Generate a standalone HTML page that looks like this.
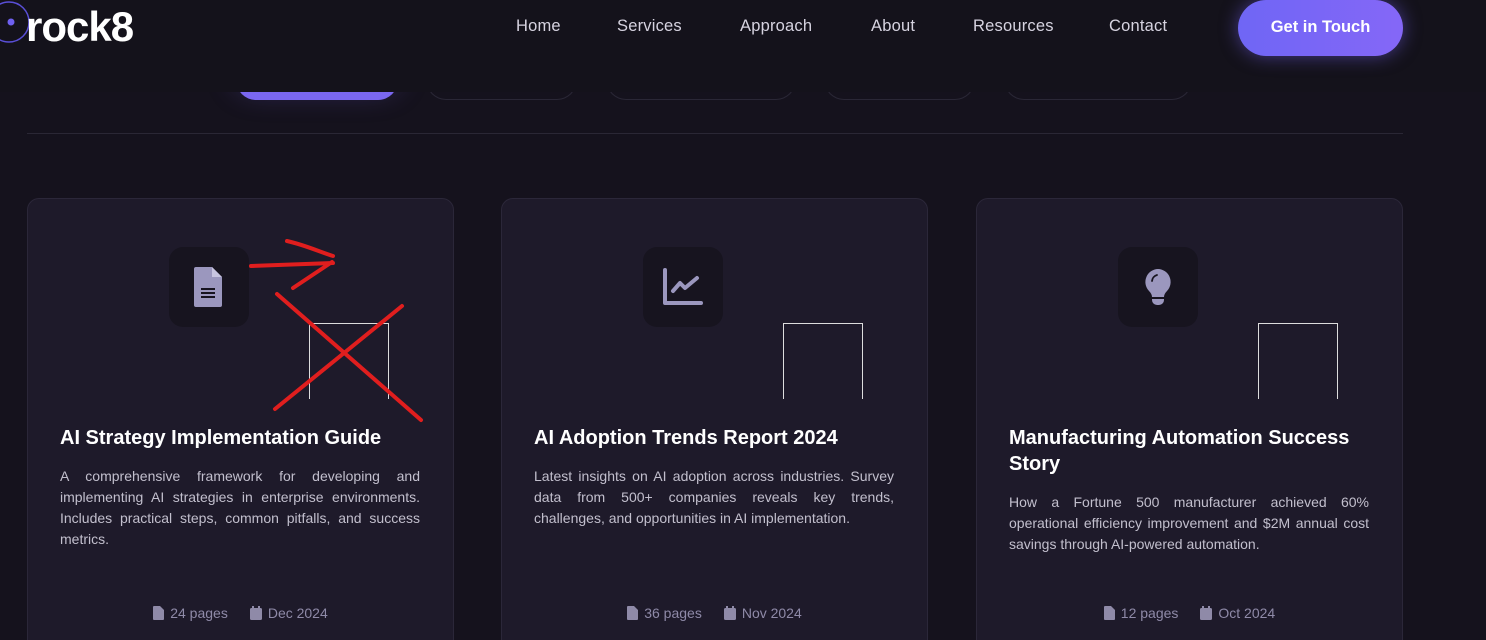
<!DOCTYPE html>
<html style="overflow:hidden"><head><meta charset="utf-8"><style>
*{margin:0;padding:0;box-sizing:border-box}
body{width:1486px;height:640px;overflow:hidden;background:#15121d;font-family:"Liberation Sans",sans-serif;position:relative}
.nav a{position:absolute;top:17px;color:#d6d3e0;font-size:16.5px;text-decoration:none;letter-spacing:.2px}
.btn{position:absolute;left:1238px;top:0;width:165px;height:56px;border-radius:28px;background:linear-gradient(90deg,#6f66f5,#8567f7);color:#fff;font-weight:bold;font-size:16.5px;text-align:center;line-height:55px;box-shadow:0 0 18px rgba(120,100,250,.5)}
.tab{position:absolute;top:58px;height:42px;border-radius:0 0 20px 20px;border:1px solid #2a2736;border-top:none}
.hr{position:absolute;left:27px;top:133px;width:1376px;height:1px;background:#2a2735}
.card{position:absolute;top:198px;width:427px;height:470px;border-radius:12px;background:#1e1a2a;border:1px solid #2b2739}
.ib{position:absolute;top:48px;width:80px;height:80px;border-radius:14px;background:#17141f}
.ib svg{position:absolute;left:20px;top:20px}
.img{position:absolute;top:124px;width:80px;height:76px;border-left:1px solid #ddd;border-right:1px solid #ddd;border-top:1px solid #ddd}
.card h3{position:absolute;left:32px;top:226px;width:362px;color:#fff;font-size:20px;line-height:26px;font-weight:bold}
.card p{position:absolute;left:32px;width:360px;color:#c2bfcd;font-size:14px;line-height:21px;text-align:justify}
.meta{position:absolute;top:406px;left:0;width:100%;text-align:center;color:#8f8aa8;font-size:14px}
.meta span{margin:0 11px}
.meta svg{vertical-align:-2px;margin-right:6px}
</style></head><body>
<div class="tab" style="left:236px;width:162px;border:none;background:#7a67f0;box-shadow:0 -10px 30px rgba(120,100,240,.35)"></div>
<div class="tab" style="left:426px;width:151px"></div>
<div class="tab" style="left:606px;width:190px"></div>
<div class="tab" style="left:824px;width:151px"></div>
<div class="tab" style="left:1004px;width:188px"></div>
<div style="position:absolute;left:0;top:0;width:1486px;height:92px;background:#14121b"></div>
<svg style="position:absolute;left:0;top:0" width="40" height="46"><circle cx="9" cy="22" r="20" fill="none" stroke="#5a4fd8" stroke-width="1.5"/><circle cx="11" cy="22" r="3.5" fill="#6e60f0"/></svg>
<div style="position:absolute;left:26px;top:5px;color:#fff;font-weight:bold;font-size:42px;letter-spacing:-1px;line-height:44px">rock8</div>
<div class="nav"><a style="left:516px">Home</a><a style="left:617px">Services</a><a style="left:740px">Approach</a><a style="left:871px">About</a><a style="left:973px">Resources</a><a style="left:1109px">Contact</a></div>
<div class="btn">Get in Touch</div>
<div class="hr"></div>

<div class="card" style="left:27px">
<div class="ib" style="left:141px"><svg width="40" height="40" viewBox="0 0 40 40"><path d="M7 0h16l10 10v28a2 2 0 0 1-2 2H7a2 2 0 0 1-2-2V2a2 2 0 0 1 2-2z" fill="#9b97be"/><path d="M23 0v10h10z" fill="#c8c5e0"/><path d="M12 22h14M12 26h14M12 30h14" stroke="#17141f" stroke-width="2"/></svg></div>
<div class="img" style="left:281px"></div>
<h3>AI Strategy Implementation Guide</h3>
<p style="top:267px">A comprehensive framework for developing and implementing AI strategies in enterprise environments. Includes practical steps, common pitfalls, and success metrics.</p>
<div class="meta"><span><svg width="11" height="14"><path d="M0 1a1 1 0 0 1 1-1h6l4 4v9a1 1 0 0 1-1 1H1a1 1 0 0 1-1-1z" fill="#8f8aa8"/></svg>24 pages</span><span><svg width="12" height="14"><rect x="0" y="2" width="12" height="12" rx="1.5" fill="#8f8aa8"/><rect x="2" y="0" width="2" height="4" fill="#8f8aa8"/><rect x="8" y="0" width="2" height="4" fill="#8f8aa8"/></svg>Dec 2024</span></div>
</div>

<div class="card" style="left:501px">
<div class="ib" style="left:141px"><svg width="40" height="40" viewBox="0 0 40 40"><path d="M2 3v33h36" stroke="#9b97be" stroke-width="4" fill="none" stroke-linecap="round" stroke-linejoin="round"/><path d="M10 24l7-8 5 5 12-10" stroke="#9b97be" stroke-width="4" fill="none" stroke-linecap="round" stroke-linejoin="round"/></svg></div>
<div class="img" style="left:281px"></div>
<h3>AI Adoption Trends Report 2024</h3>
<p style="top:267px">Latest insights on AI adoption across industries. Survey data from 500+ companies reveals key trends, challenges, and opportunities in AI implementation.</p>
<div class="meta"><span><svg width="11" height="14"><path d="M0 1a1 1 0 0 1 1-1h6l4 4v9a1 1 0 0 1-1 1H1a1 1 0 0 1-1-1z" fill="#8f8aa8"/></svg>36 pages</span><span><svg width="12" height="14"><rect x="0" y="2" width="12" height="12" rx="1.5" fill="#8f8aa8"/><rect x="2" y="0" width="2" height="4" fill="#8f8aa8"/><rect x="8" y="0" width="2" height="4" fill="#8f8aa8"/></svg>Nov 2024</span></div>
</div>

<div class="card" style="left:976px">
<div class="ib" style="left:141px"><svg width="40" height="40" viewBox="0 0 40 40"><path d="M20 2a13 13 0 0 0-9 22c2 2 3 4 3 6h12c0-2 1-4 3-6A13 13 0 0 0 20 2z" fill="#9b97be"/><path d="M14 32h12v1a5 5 0 0 1-5 5h-2a5 5 0 0 1-5-5z" fill="#9b97be"/><path d="M14 14a7 7 0 0 1 5-6" stroke="#17141f" stroke-width="1.8" fill="none" stroke-linecap="round"/></svg></div>
<div class="img" style="left:281px"></div>
<h3>Manufacturing Automation Success Story</h3>
<p style="top:293px">How a Fortune 500 manufacturer achieved 60% operational efficiency improvement and $2M annual cost savings through AI-powered automation.</p>
<div class="meta"><span><svg width="11" height="14"><path d="M0 1a1 1 0 0 1 1-1h6l4 4v9a1 1 0 0 1-1 1H1a1 1 0 0 1-1-1z" fill="#8f8aa8"/></svg>12 pages</span><span><svg width="12" height="14"><rect x="0" y="2" width="12" height="12" rx="1.5" fill="#8f8aa8"/><rect x="2" y="0" width="2" height="4" fill="#8f8aa8"/><rect x="8" y="0" width="2" height="4" fill="#8f8aa8"/></svg>Oct 2024</span></div>
</div>

<svg style="position:absolute;left:0;top:0" width="1486" height="640"><g stroke="#e01e1e" stroke-width="4" fill="none" stroke-linecap="round"><path d="M251 266L333 263M287 241C305 245 320 252 333 256M293 288L332 262M277 294L421 420M402 306L275 409"/></g></svg>
</body></html>
